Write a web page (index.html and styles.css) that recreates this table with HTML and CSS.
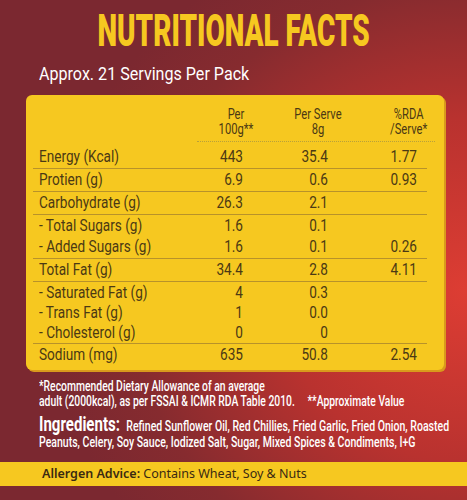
FILE: index.html
```html
<!DOCTYPE html>
<html lang="en">
<head>
    <meta charset="UTF-8">
    <meta name="viewport" content="width=device-width, initial-scale=1.0">
    <title>Nutritional Facts</title>
    <link rel="stylesheet" href="styles.css">
</head>
<body>
    <div class="label">
        <h1 class="title"><span>NUTRITIONAL FACTS</span></h1>
        <p class="servings">Approx. 21 Servings Per Pack</p>

        <div class="panel">
            <div class="head">
                <div>Per<br>100g**</div>
                <div>Per Serve<br>8g</div>
                <div class="rda">%RDA<br>/Serve*</div>
            </div>

            <div class="group first">
                <div class="row"><span>Energy (Kcal)</span><span>443</span><span>35.4</span><span>1.77</span></div>
            </div>
            <div class="group">
                <div class="row"><span>Protien (g)</span><span>6.9</span><span>0.6</span><span>0.93</span></div>
            </div>
            <div class="group">
                <div class="row"><span>Carbohydrate (g)</span><span>26.3</span><span>2.1</span><span></span></div>
            </div>
            <div class="group">
                <div class="row"><span>- Total Sugars (g)</span><span>1.6</span><span>0.1</span><span></span></div>
                <div class="row"><span>- Added Sugars (g)</span><span>1.6</span><span>0.1</span><span>0.26</span></div>
            </div>
            <div class="group">
                <div class="row"><span>Total Fat (g)</span><span>34.4</span><span>2.8</span><span>4.11</span></div>
            </div>
            <div class="group tight">
                <div class="row"><span>- Saturated Fat (g)</span><span>4</span><span>0.3</span><span></span></div>
                <div class="row"><span>- Trans Fat (g)</span><span>1</span><span>0.0</span><span></span></div>
                <div class="row"><span>- Cholesterol (g)</span><span>0</span><span>0</span><span></span></div>
            </div>
            <div class="group last">
                <div class="row"><span>Sodium (mg)</span><span>635</span><span>50.8</span><span>2.54</span></div>
            </div>
        </div>

        <p class="note">*Recommended Dietary Allowance of an average<br>adult (2000kcal), as per FSSAI &amp; ICMR RDA Table 2010.<span class="approx">**Approximate Value</span></p>

        <p class="ingredients"><strong>Ingredients:</strong> Refined Sunflower Oil, Red Chillies, Fried Garlic, Fried Onion, Roasted<br>Peanuts, Celery, Soy Sauce, Iodized Salt, Sugar, Mixed Spices &amp; Condiments, I+G</p>
    </div>

    <div class="allergen"><b>Allergen Advice:</b> Contains Wheat, Soy &amp; Nuts</div>
</body>
</html>
```

FILE: styles.css
```css
:root {
    --yellow: #f6c820;
    --ink: #4b3914;
    --narrow: 0.8;
}

body {
    margin: 0;
    width: 467px;
    height: 500px;
    overflow: hidden;
    font-family: Roboto, "Liberation Sans", sans-serif;
    background: radial-gradient(ellipse 420px 380px at 100% 58%, #dd3d33 0%, #b9322f 45%, #862b2f 80%, #7b2830 100%);
    color: white;
}

.label {
    padding: 0 23px 0 26px;
}

/* the artwork uses a condensed face, so text is narrowed with scaleX */
.title {
    margin: 0 -23px 0 -26px;
    padding-top: 10px;
    height: 42px;
    display: flex;
    justify-content: center;
    white-space: nowrap;
    color: var(--yellow);
    font-size: 45px;
    line-height: 42px;
    font-weight: 900;
}

.title span {
    display: inline-block;
    transform: scaleX(0.62);
}

.servings {
    margin: 11px 0 0 13px;
    font-size: 18.5px;
    line-height: 22px;
    white-space: nowrap;
    transform: scaleX(0.87);
    transform-origin: left;
}

.panel {
    margin-top: 10px;
    background: var(--yellow);
    border-radius: 6px;
    box-shadow: 2px 2px 0 #d99a1c;
    color: var(--ink);
    padding: 0 17px 5px 7px;
}

.head {
    display: grid;
    grid-template-columns: 78px 86px 1fr;
    margin: 0 -8px 0 164px;
    padding: 12px 0 4px;
    border-bottom: 1px dotted #b8a03a;
    text-align: center;
    font-size: 14px;
    line-height: 15px;
}

.head div {
    white-space: nowrap;
    transform: scaleX(var(--narrow));
}

.head .rda {
    padding-left: 20px;
    transform-origin: 68% 50%;
}

.group {
    padding-bottom: 1px;
    border-bottom: 1px solid #b8922a;
}

.group.first {
    padding-top: 4px;
}

.group.last {
    border-bottom: none;
    padding-bottom: 0;
}

.row {
    display: grid;
    grid-template-columns: 144px 60px 85px 89px;
    padding: 0 10px 0 6px;
    font-size: 17px;
    line-height: 21px;
}

.group.tight .row {
    line-height: 20px;
}

.row span {
    white-space: nowrap;
    transform: scaleX(var(--narrow));
    transform-origin: left;
}

.row span:not(:first-child) {
    text-align: right;
    transform-origin: right;
}

.note {
    margin: 9px 0 0 13px;
    font-size: 14px;
    line-height: 15px;
    font-weight: 500;
    white-space: nowrap;
    transform: scaleX(0.74);
    transform-origin: left;
}

.approx {
    margin-left: 17px;
}

.ingredients {
    margin: 7px 0 0 13px;
    font-size: 14px;
    line-height: 16px;
    font-weight: 500;
    white-space: nowrap;
    transform: scaleX(0.752);
    transform-origin: left;
}

.ingredients strong {
    font-size: 20px;
    font-weight: bold;
    margin-right: 5px;
}

.allergen {
    margin-top: 12px;
    background: var(--yellow);
    height: 24px;
    line-height: 24px;
    padding-left: 42px;
    color: #3a2a12;
    font-family: "Noto Sans", sans-serif;
    font-size: 12.5px;
}

.allergen b {
    font-weight: 600;
}
```
